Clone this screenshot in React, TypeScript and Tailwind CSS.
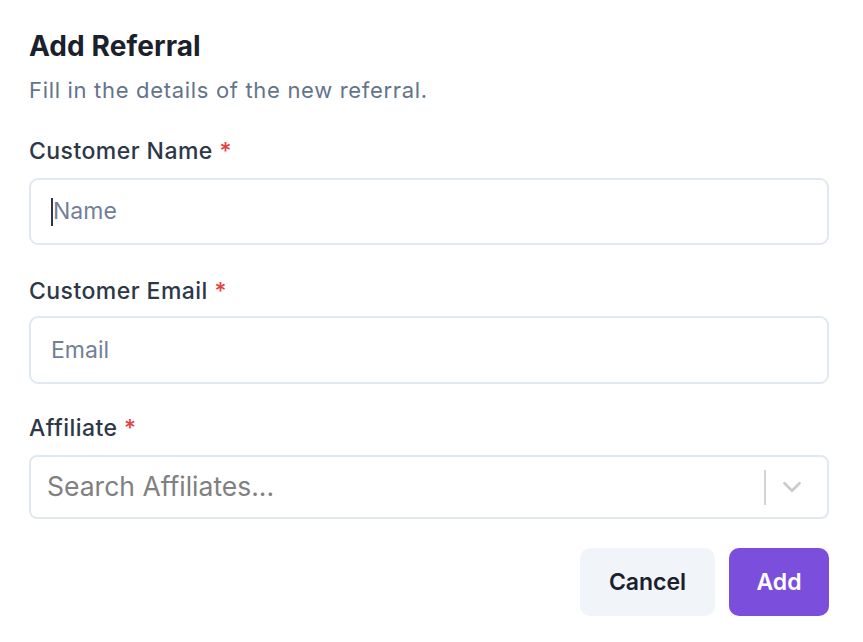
import { ChevronDown } from "lucide-react";

function Label({ text }: { text: string }) {
  return (
    <label className="block text-[23px] font-medium leading-none tracking-[0.45px] text-[#2d3748]">
      {text} <span className="text-[#e53e3e]">*</span>
    </label>
  );
}

export default function App() {
  return (
    <div className="min-h-screen bg-white font-['Inter',sans-serif]">
      <div className="pl-[29px] pr-[34px] pt-[32px]">
        <h2 className="text-[28px] font-bold leading-none text-[#1a202c] tracking-[0.1px]">Add Referral</h2>
        <p className="mt-[19px] text-[22px] leading-none tracking-[0.68px] text-[#64748b]">
          Fill in the details of the new referral.
        </p>

        <div className="mt-[39px]">
          <Label text="Customer Name" />
          <div className="mt-[15px] flex h-[67px] items-center rounded-[9px] border-2 border-[#e2e8f0] pl-[20px]">
            <span className="h-[28px] w-[2px] bg-[#2d3748]" />
            <span className="text-[23px] text-[#718096]">Name</span>
          </div>
        </div>

        <div className="mt-[35px]">
          <Label text="Customer Email" />
          <div className="mt-[13px] flex h-[68px] items-center rounded-[9px] border-2 border-[#e2e8f0] pl-[20px]">
            <span className="text-[23px] text-[#718096]">Email</span>
          </div>
        </div>

        <div className="mt-[33px]">
          <Label text="Affiliate" />
          <div className="mt-[15px] flex h-[64px] items-center rounded-[8px] border-2 border-[#e2e8f0] pl-[16px] pr-[20px]">
            <span className="flex-1 text-[26.5px] text-[#808080]">Search Affiliates...</span>
            <span className="h-[35px] w-[2px] bg-[#d4d4d8]" />
            <ChevronDown className="ml-[11px] text-[#cccccc]" size={30} strokeWidth={2.2} />
          </div>
        </div>

        <div className="mt-[29px] flex justify-end gap-[14px]">
          <button className="h-[68px] w-[135px] rounded-[10px] bg-[#f1f4f9] text-[23px] font-semibold text-[#1a202c]">
            Cancel
          </button>
          <button className="h-[68px] w-[100px] rounded-[10px] bg-[#7b4fdc] text-[23px] font-semibold text-white">
            Add
          </button>
        </div>
      </div>
    </div>
  );
}
